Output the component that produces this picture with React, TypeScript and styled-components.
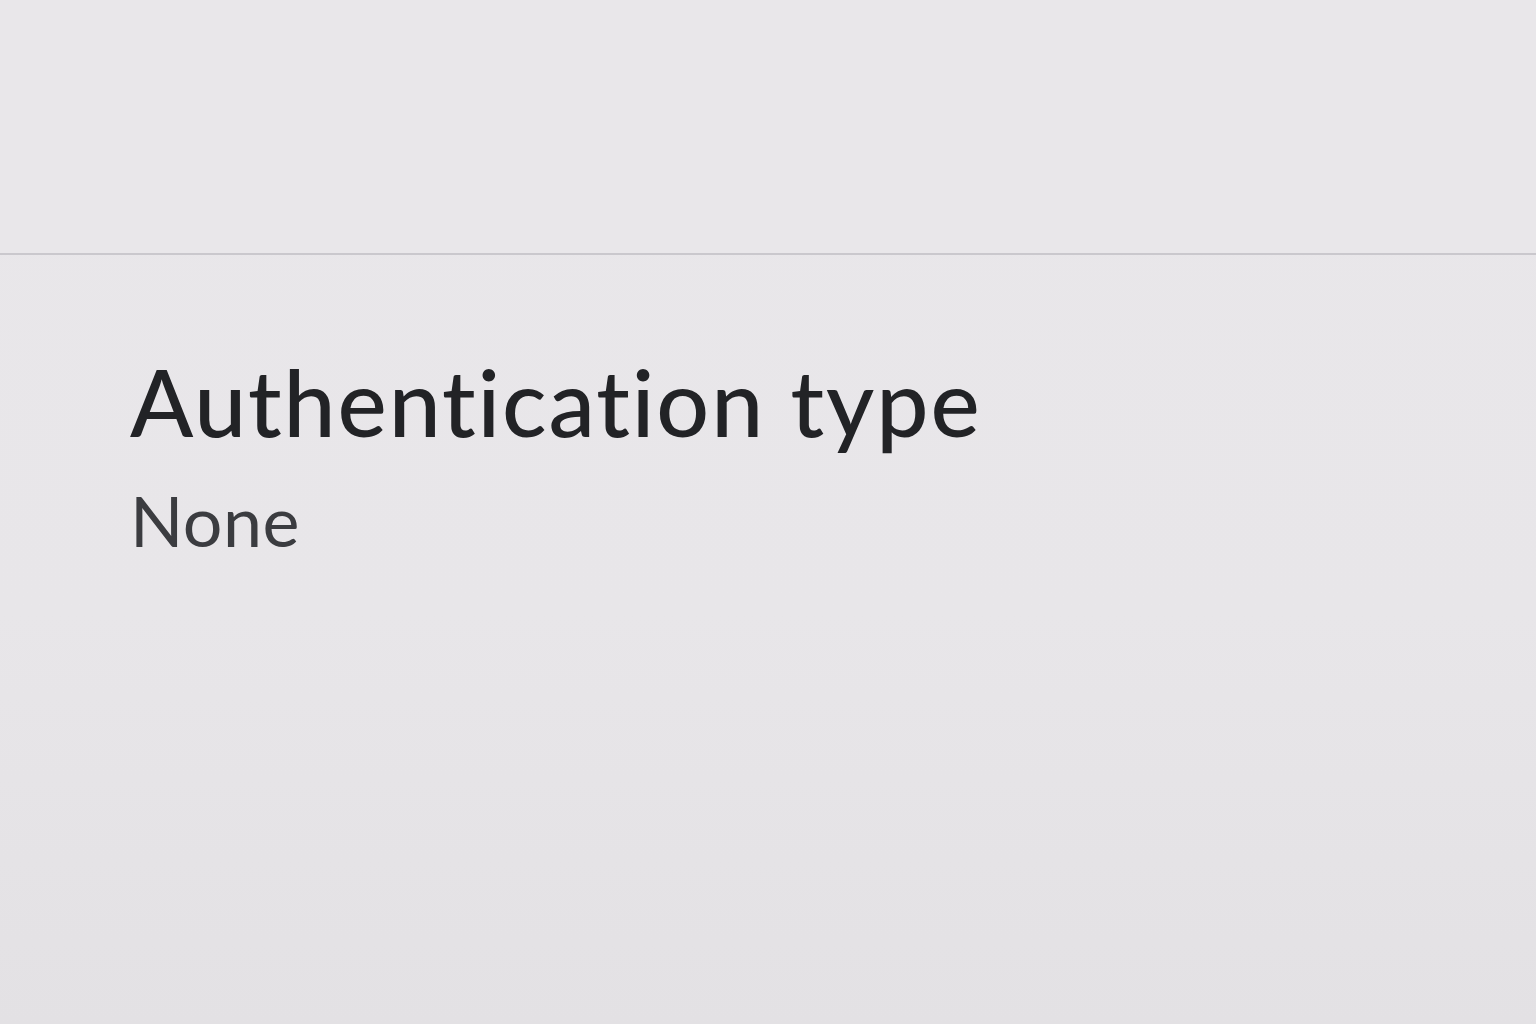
import * as React from 'react'
import styled, { createGlobalStyle } from 'styled-components'

const GlobalStyle = createGlobalStyle`
  html, body {
    margin: 0;
    padding: 0;
    background: #e8e6e9;
  }
`
const Page = styled.div`
  min-height: 1024px;
  display: flex;
  flex-direction: column;
  background: linear-gradient(180deg, #e9e7ea 0%, #e8e6e9 60%, #e3e1e4 100%);
  font-family: Lato, 'Noto Sans', sans-serif;
  font-variant-ligatures: none;
`
const TopBar = styled.header`
  height: 253px;
  border-bottom: 2px solid #cac8cd;
  background: #e9e7ea;
`
const Section = styled.section`
  display: flex;
  flex-direction: column;
  padding: 100px 130px 0;
`
const Title = styled.h1`
  margin: 0;
  font-size: 93px;
  line-height: 1;
  font-weight: 500;
  color: #222326;
  letter-spacing: 1.9px;
`
const Value = styled.p`
  margin: 37px 0 0;
  font-size: 70px;
  line-height: 1;
  font-weight: 400;
  color: #3b3c40;
  letter-spacing: 0.5px;
`

export default function App() {
  return (
    <>
      <GlobalStyle />
      <Page>
        <TopBar />
        <Section>
          <Title>Authentication type</Title>
          <Value>None</Value>
        </Section>
      </Page>
    </>
  )
}
